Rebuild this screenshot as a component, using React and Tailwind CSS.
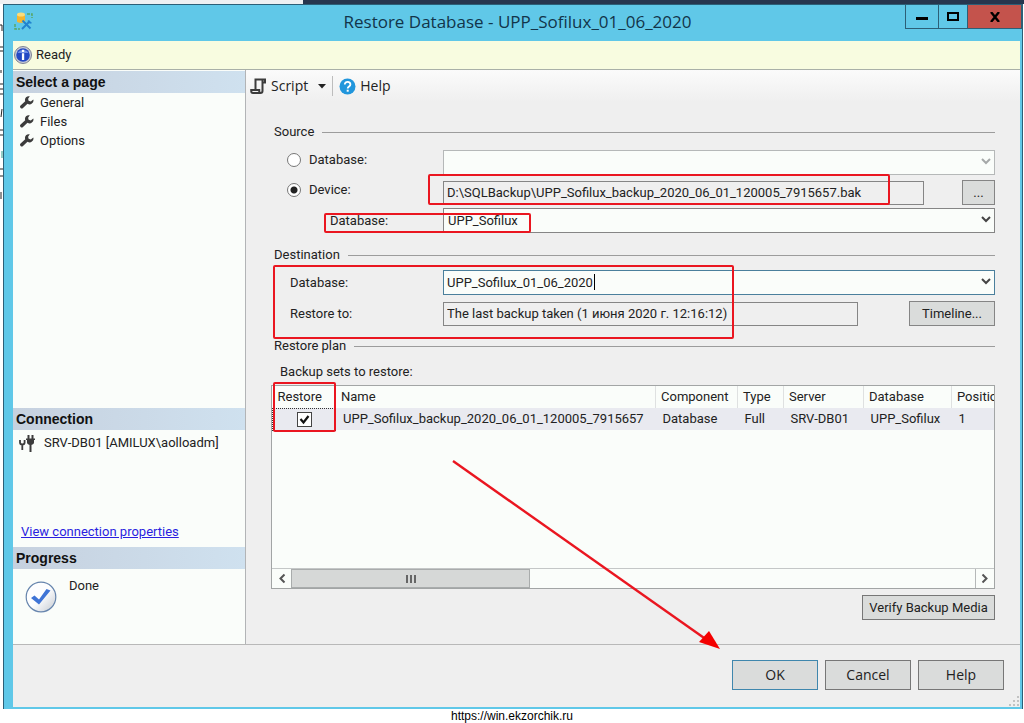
import { useState } from "react";

const pages = ["General", "Files", "Options"];

const columns = [
  { title: "Restore", width: "w-[63px]" },
  { title: "Name", width: "w-[320px]" },
  { title: "Component", width: "w-[82px]" },
  { title: "Type", width: "w-[46px]" },
  { title: "Server", width: "w-[80px]" },
  { title: "Database", width: "w-[88px]" },
  { title: "Position", width: "w-[70px]" },
];

const backups = [
  {
    name: "UPP_Sofilux_backup_2020_06_01_120005_7915657",
    component: "Database",
    type: "Full",
    server: "SRV-DB01",
    database: "UPP_Sofilux",
    position: "1",
  },
];

// Icons

function AppIcon() {
  return (
    <svg width="20" height="20" viewBox="0 0 20 20" aria-hidden="true">
      <path d="M3 3.500v7c0 1.800 8 1.800 8 0v-7z" fill="#f6b52c" />
      <ellipse cx="7" cy="3.600" rx="4" ry="2" fill="#fbdc7a" />
      <path d="M13 3h5v4M1 13v5h5" stroke="#58a66a" strokeWidth="1.500" strokeDasharray="3 1" fill="none" />
      <path d="M8.500 9.500l8 8M16 10l-8 8" stroke="#2183cf" strokeWidth="2" />
      <path d="M14 9.500l1.500 2 2 .5" stroke="#2183cf" strokeWidth="1.500" fill="none" />
    </svg>
  );
}

function InfoIcon() {
  return (
    <svg width="18" height="18" viewBox="0 0 18 18" aria-hidden="true">
      <circle cx="9" cy="9" r="8.500" fill="#c9ccd6" stroke="#7d8395" />
      <circle cx="9" cy="9" r="6.800" fill="#2449c4" />
      <path d="M3.500 7a6 5 0 0 1 11 0z" fill="#6f8fe6" />
      <path d="M7.900 3.800h2.300v2.200H7.900zM7.900 7.200h2.300v6.800H7.900z" fill="#fff" />
    </svg>
  );
}

function WrenchIcon() {
  return (
    <svg width="14" height="13" viewBox="0 0 14 13" aria-hidden="true">
      <path
        d="M9.800.3a3.800 3.800 0 0 0-4.600 4.900L.6 9.600a1.700 1.700 0 0 0 0 2.400 1.700 1.700 0 0 0 2.400 0l4.500-4.200a3.900 3.900 0 0 0 5.800-4.400l-2.500 2-2.200-.6-.5-2.100z"
        fill="#3c3c3c"
      />
    </svg>
  );
}

function PlugsIcon() {
  return (
    <svg width="17" height="17" viewBox="0 0 17 17" aria-hidden="true">
      <path d="M1 5v2.500c0 1.500 1 2 2.300 2s2.300-.5 2.300-2V5M3.300 9v6" stroke="#3c3c3c" strokeWidth="1.800" fill="none" />
      <path d="M9.500 0v4M13.500 0v4M11.500 9v8" stroke="#3c3c3c" strokeWidth="2" />
      <path d="M7 3.500h9V5h-1v2.500c0 1.500-1.500 2.500-3.500 2.500S8 9 8 7.500V5H7z" fill="#3c3c3c" />
    </svg>
  );
}

function ScriptIcon() {
  return (
    <svg width="17" height="17" viewBox="0 0 17 17" aria-hidden="true">
      <path
        d="M5.500 12V1.500h9.500v3h-2M12.500 2v11c0 1.500-.8 2-2 2H3c-1.300 0-1.800-.8-1.800-2v-1h8v1c0 1.200.5 2 1.500 2"
        stroke="#3c3c3c"
        strokeWidth="2"
        fill="none"
      />
    </svg>
  );
}

function HelpIcon() {
  return (
    <svg width="17" height="17" viewBox="0 0 17 17" aria-hidden="true">
      <circle cx="8.500" cy="8.500" r="8" fill="#2196dc" />
      <path d="M5.800 6.500c0-3.500 5.600-3.400 5.600 0 0 2-2.700 2-2.700 4" stroke="#fff" strokeWidth="1.800" fill="none" />
      <path d="M7.700 11.700h2v2h-2z" fill="#fff" />
    </svg>
  );
}

function DoneIcon() {
  return (
    <svg width="32" height="32" viewBox="0 0 32 32" aria-hidden="true">
      <defs>
        <linearGradient id="disc" x1="0" y1="0" x2="1" y2="1">
          <stop offset="0.500" stopColor="#fdfeff" />
          <stop offset="1" stopColor="#c3c8cf" />
        </linearGradient>
      </defs>
      <circle cx="16" cy="16" r="14.800" fill="url(#disc)" stroke="#6685ad" strokeWidth="1.200" />
      <path d="M6 17l3.500-2.500 4.500 4L21.500 8l4 1.500L14 23.500z" fill="#3f74d6" />
    </svg>
  );
}

function Chevron({ className }) {
  return (
    <svg width="10" height="7" viewBox="0 0 10 7" className={className} aria-hidden="true">
      <path d="M1 1l4 4 4-4" stroke="currentColor" strokeWidth="2" fill="none" />
    </svg>
  );
}

// Small building blocks

function Button({ children, className }) {
  return (
    <button type="button" className={`border bg-[#dadcdb] text-center whitespace-nowrap ${className}`}>
      {children}
    </button>
  );
}

function SideTitle({ children }) {
  return (
    <h2 className="h-[22px] pl-[3px] leading-[22px] text-sm font-bold text-[#111] font-['Liberation_Sans',Arial,sans-serif] bg-linear-to-r from-[#c6d1df] to-[#cfe1ef]">
      {children}
    </h2>
  );
}

function GroupTitle({ children }) {
  return (
    <div className="flex items-center gap-2 h-5">
      <h3>{children}</h3>
      <span className="flex-1 h-px bg-[#9c9c9c]" />
    </div>
  );
}

function Highlight({ className }) {
  return <span className={`absolute z-10 border-2 border-[#ea1620] rounded-xs pointer-events-none ${className}`} />;
}

function TitleBar() {
  return (
    <header className="flex h-9 pl-2.5">
      <div className="w-[116px] pt-1.5">
        <AppIcon />
      </div>
      <h1 className="flex-1 text-center text-[17px] leading-[34px] text-[#12354a] font-['Open_Sans',sans-serif]">
        Restore Database - UPP_Sofilux_01_06_2020
      </h1>
      <div className="flex h-6 border border-t-0 border-[#2c5f77]">
        <button type="button" aria-label="Minimize" className="w-8 flex items-center justify-center">
          <span className="w-3 h-[3px] mt-1 bg-black" />
        </button>
        <button type="button" aria-label="Maximize" className="w-[30px] flex items-center justify-center border-x border-[#2c5f77]">
          <span className="w-3 h-[9px] border-2 border-black" />
        </button>
        <button type="button" aria-label="Close" className="w-[53px] flex items-center justify-center bg-[#c4534c]">
          <svg width="10" height="10" viewBox="0 0 10 10" aria-hidden="true">
            <path d="M1 0l8 10M9 0L1 10" stroke="#000" strokeWidth="2.400" />
          </svg>
        </button>
      </div>
    </header>
  );
}

function Sidebar() {
  return (
    <aside className="w-[233px] shrink-0 flex flex-col pt-px bg-[#fafdfa] border-r border-[#b2b4b6]">
      <SideTitle>Select a page</SideTitle>
      <nav className="flex-1">
        {pages.map((page) => (
          <a key={page} href="#" className="flex items-center gap-1.5 h-[19px] pl-[7px]">
            <WrenchIcon />
            {page}
          </a>
        ))}
      </nav>
      <SideTitle>Connection</SideTitle>
      <div className="h-[117px] flex flex-col justify-between items-start px-2 pt-1 pb-1.5">
        <p className="flex items-center gap-2 -ml-0.5">
          <PlugsIcon />
          SRV-DB01 [AMILUX\aolloadm]
        </p>
        <a href="#" className="text-[#2a1fe0] underline">
          View connection properties
        </a>
      </div>
      <SideTitle>Progress</SideTitle>
      <div className="h-[75px] flex gap-3 pl-3 pt-2">
        <div className="pt-1">
          <DoneIcon />
        </div>
        <p>Done</p>
      </div>
    </aside>
  );
}

function Toolbar() {
  return (
    <div className="flex items-center h-8 pl-1 text-sm font-['Open_Sans',sans-serif] bg-linear-to-b from-[#fbfbfb] to-[#efefef]">
      <button type="button" className="flex items-center gap-1">
        <ScriptIcon />
        Script
        <svg width="8" height="5" viewBox="0 0 8 5" className="ml-1.5" aria-hidden="true">
          <path d="M0 0h8L4 4.500z" fill="#222" />
        </svg>
      </button>
      <span className="w-px h-5 mx-1.5 bg-[#bdbdbd]" />
      <button type="button" className="flex items-center gap-1">
        <HelpIcon />
        Help
      </button>
    </div>
  );
}

const radio =
  "appearance-none size-3.5 rounded-full border border-[#777] bg-white checked:bg-[radial-gradient(circle,#222_0_3px,#fff_4px)]";

function Source() {
  const [from, setFrom] = useState("device");
  return (
    <section>
      <GroupTitle>Source</GroupTitle>
      <div className="flex items-center mt-2">
        <label className="w-[169px] flex items-center gap-2 pl-[13px] pb-1.5">
          <input type="radio" name="from" className={radio} checked={from === "database"} onChange={() => setFrom("database")} />
          Database:
        </label>
        <div className="relative flex-1">
          <select aria-label="Source database" disabled className="appearance-none block w-full h-[25px] border border-[#b5b8b8] bg-[#fafdfa]" />
          <Chevron className="absolute right-1 top-2 text-[#a5a8a8]" />
        </div>
      </div>
      <div className="relative flex items-center mt-[5px]">
        <label className="w-[169px] flex items-center gap-2 pl-[13px] pb-1.5">
          <input type="radio" name="from" className={radio} checked={from === "device"} onChange={() => setFrom("device")} />
          Device:
        </label>
        <input aria-label="Device path" readOnly value="D:\SQLBackup\UPP_Sofilux_backup_2020_06_01_120005_7915657.bak" className="flex-1 min-w-0 h-6 px-[3px] border border-[#858585] bg-[#efefef]" />
        <Button className="w-[33px] h-[25px] ml-[38px] border-[#858585]">...</Button>
        <Highlight className="left-[154px] right-[105px] -top-1.5 h-[31px]" />
      </div>
      <div className="relative flex items-center mt-[3px]">
        <label htmlFor="device-db" className="w-[169px] pl-14">
          Database:
        </label>
        <div className="relative flex-1">
          <select id="device-db" className="appearance-none block w-full h-[25px] px-1 border border-[#858585] bg-[#fafdfa]">
            <option>UPP_Sofilux</option>
          </select>
          <Chevron className="absolute right-1 top-2 text-[#444]" />
        </div>
        <Highlight className="left-[50px] w-[207px] top-[5px] h-5" />
      </div>
    </section>
  );
}

function Destination() {
  const [name, setName] = useState("UPP_Sofilux_01_06_2020");
  return (
    <section className="relative mt-3">
      <GroupTitle>Destination</GroupTitle>
      <div className="flex items-center mt-[5px]">
        <label htmlFor="target-db" className="w-[169px] pl-4">
          Database:
        </label>
        <div className="relative flex-1">
          <input id="target-db" value={name} onChange={(e) => setName(e.target.value)} className="block w-full h-[25px] px-[3px] border border-[#4a7f9c] bg-[#fafdfa] outline-none" />
          <span className="absolute left-[151px] top-1 w-px h-4 bg-black" />
          <button type="button" aria-label="Show databases" className="absolute right-1 top-2 text-[#444]">
            <Chevron className="block" />
          </button>
        </div>
      </div>
      <div className="flex items-center mt-1.5">
        <label htmlFor="restore-to" className="w-[169px] pl-4">
          Restore to:
        </label>
        <input id="restore-to" readOnly value="The last backup taken (1 июня 2020 г. 12:16:12)" className="flex-1 min-w-0 h-6 px-[3px] border border-[#858585] bg-[#efefef]" />
        <Button className="w-[86px] h-[25px] ml-[51px] border-[#858585]">Timeline...</Button>
      </div>
      <Highlight className="-left-px w-[461px] top-5 h-[74px]" />
    </section>
  );
}

function Plan() {
  return (
    <section className="flex-1 flex flex-col mt-2.5">
      <GroupTitle>Restore plan</GroupTitle>
      <p className="mt-1.5 h-5 leading-5 pl-1.5">Backup sets to restore:</p>
      <div className="relative flex-1 flex flex-col mt-[3px] -ml-[3px] border border-[#a2a5a5] bg-[#fafdfa]">
        <div className="flex-1 overflow-hidden">
          <table className="table-fixed w-[749px] text-left whitespace-nowrap">
            <thead>
              <tr className="h-[22px]">
                {columns.map((column) => (
                  <th key={column.title} className={`${column.width} pl-[5px] font-normal border-r border-[#dfe1e1]`}>
                    {column.title}
                  </th>
                ))}
              </tr>
            </thead>
            <tbody>
              {backups.map((backup) => (
                <tr key={backup.name} className="h-[22px] bg-[#e9eaf0]">
                  <td className="border border-dotted border-[#333]">
                    <label className="relative block size-[15px] mx-auto">
                      <input type="checkbox" aria-label="Restore" defaultChecked className="peer appearance-none block size-[15px] border border-[#444] bg-white" />
                      <svg viewBox="0 0 15 15" className="absolute inset-0 hidden peer-checked:block" aria-hidden="true">
                        <path d="M3.500 7l3 3.500 5-6.500" stroke="#111" strokeWidth="2.200" fill="none" />
                      </svg>
                    </label>
                  </td>
                  <td className="pl-[7px]">{backup.name}</td>
                  <td className="pl-[7px]">{backup.component}</td>
                  <td className="pl-[7px]">{backup.type}</td>
                  <td className="pl-[7px]">{backup.server}</td>
                  <td className="pl-[7px]">{backup.database}</td>
                  <td className="pl-[7px]">{backup.position}</td>
                </tr>
              ))}
            </tbody>
          </table>
        </div>
        <div className="flex h-5 border-t border-[#c4c7c7]">
          <button type="button" aria-label="Scroll left" className="w-[19px] flex items-center justify-center text-[#555]">
            <Chevron className="rotate-90" />
          </button>
          <div className="flex-1">
            <div className="flex items-center justify-center gap-0.5 w-[35%] h-full border border-[#a9acac] bg-[#d6d8d7]">
              <span className="w-0.5 h-2 bg-[#666]" />
              <span className="w-0.5 h-2 bg-[#666]" />
              <span className="w-0.5 h-2 bg-[#666]" />
            </div>
          </div>
          <button type="button" aria-label="Scroll right" className="w-[19px] flex items-center justify-center text-[#555] border-l border-[#b5b8b8]">
            <Chevron className="-rotate-90" />
          </button>
        </div>
        <Highlight className="left-px w-[63px] -top-1 h-[50px]" />
      </div>
      <Button className="self-end w-[133px] h-[25px] mt-1.5 border-[#777]">Verify Backup Media</Button>
    </section>
  );
}

// Edge of the window that lies behind the dialog
function Backdrop() {
  return (
    <svg width="3" height="200" viewBox="0 0 3 200" className="shrink-0" aria-hidden="true">
      <path
        d="M0 21h2v6M0 43h3M0 47h3M1 66v3M0 80h3M0 85h3M0 90h3M2 105l-1 8M0 126h3M0 131h3M0 165h3M0 172h3M1 188v7"
        stroke="#222"
        fill="none"
      />
      <path d="M2 147v7" stroke="#2f9c8c" />
    </svg>
  );
}

export default function App() {
  return (
    <div className="min-h-screen flex flex-col bg-white text-[13px] leading-[18px] text-[#222] font-[Roboto,'Liberation_Sans',sans-serif]">
      <div className="flex h-1">
        <span className="w-[303px] bg-[#eef0f2]" />
        <span className="flex-1 bg-[#27364e]" />
      </div>
      <div className="flex-1 flex">
        <Backdrop />
        <div className="flex-1 min-w-0 flex flex-col mr-px border border-b-0 border-[#2c5f77] bg-[#60c8e8]">
          <TitleBar />
          <main className="flex-1 flex flex-col ml-[9px] mr-0.5 mb-0.5 bg-[#efefef]">
            <p className="flex items-center gap-1 h-[29px] pl-px border-b border-[#a9b0a8] bg-[#f8fce0]">
              <InfoIcon />
              Ready
            </p>
            <div className="flex-1 flex border-b border-[#b8b8b8]">
              <Sidebar />
              <div className="flex-1 min-w-0 flex flex-col">
                <Toolbar />
                <div className="flex-1 flex flex-col pl-7 pr-[25px] pt-5 pb-6">
                  <Source />
                  <Destination />
                  <Plan />
                </div>
              </div>
            </div>
            <footer className="relative flex justify-end gap-[7px] pt-[15px] pb-[17px] pr-4 text-sm font-['Open_Sans',sans-serif]">
              <Button className="w-[86px] h-[30px] border-[#3f87ad]">OK</Button>
              <Button className="w-[86px] h-[30px] border-[#777]">Cancel</Button>
              <Button className="w-[86px] h-[30px] border-[#777]">Help</Button>
              <svg width="11" height="11" viewBox="0 0 11 11" className="absolute right-0 bottom-0" aria-hidden="true">
                <path d="M8 0h2v2H8zM4 4h2v2H4zM8 4h2v2H8zM0 8h2v2H0zM4 8h2v2H4zM8 8h2v2H8z" fill="#c2c2c2" />
              </svg>
              <svg width="270" height="190" viewBox="0 0 270 190" className="absolute right-[298px] -top-[185px] pointer-events-none" aria-hidden="true">
                <path d="M1 1l254 179" stroke="#ea1620" strokeWidth="2.400" />
                <path d="M268 189l-21-7 10-11z" fill="#f40000" />
              </svg>
            </footer>
          </main>
        </div>
      </div>
      <p className="text-center text-xs leading-[14px] text-black font-['Liberation_Sans',Arial,sans-serif]">https://win.ekzorchik.ru</p>
    </div>
  );
}
